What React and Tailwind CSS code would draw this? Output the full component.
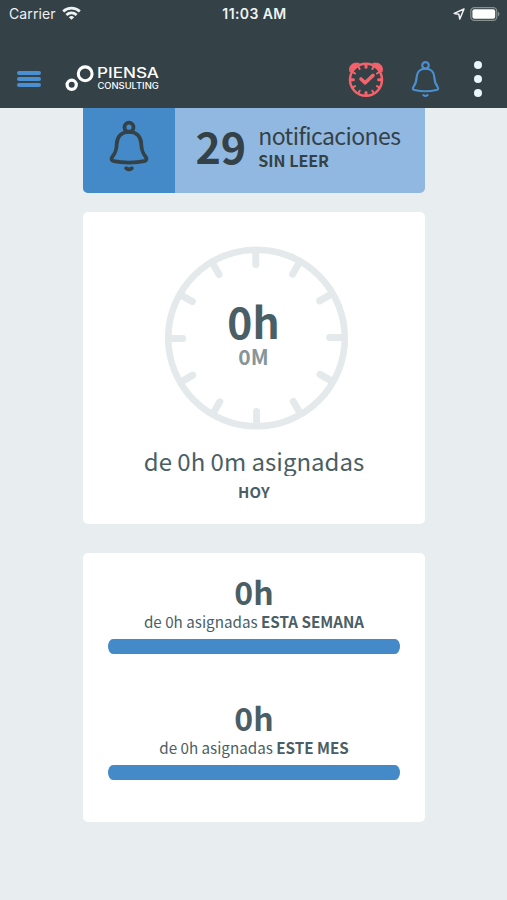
const sans = "font-['Noto_Sans_CJK_SC','Noto_Sans',sans-serif]";

const periods = [
  { label: "ESTA SEMANA", hours: "0h", assigned: "0h", progress: 100 },
  { label: "ESTE MES", hours: "0h", assigned: "0h", progress: 100 },
];

const ticks = [0, 30, 60, 90, 120, 150, 180, 210, 240, 270, 300, 330];

const BellIcon = ({ className, strokeWidth = 3 }) => (
  <svg viewBox="0 0 40 52" className={className} fill="none" stroke="currentColor" strokeWidth={strokeWidth} strokeLinecap="round" strokeLinejoin="round">
    <circle cx="20" cy="7.2" r="4.5" />
    <path d="M20 11.8C12.5 11.8 8.2 16.8 7.8 23.5C7.4 31 6.2 33.2 3.6 36.4C1.8 39 2.4 40.8 4.8 41.2C13 43 27 43 35.2 41.2C37.6 40.8 38.2 39 36.4 36.4C33.8 33.2 32.6 31 32.2 23.5C31.8 16.8 27.5 11.8 20 11.8Z" />
    <path d="M17.2 48.2Q20 50.4 22.8 48.2" />
  </svg>
);

const AlarmIcon = () => (
  <svg viewBox="0 0 36 38" className="w-9 h-[38px] text-[#f4636b]" fill="none" stroke="currentColor" strokeLinecap="round" strokeLinejoin="round">
    <path d="M1.8 11.5C0.4 6 4.6 1.8 11 3.4Z" fill="currentColor" strokeWidth="1" />
    <path d="M34.2 11.5C35.6 6 31.4 1.8 25 3.4Z" fill="currentColor" strokeWidth="1" />
    <circle cx="18" cy="19.8" r="16" strokeWidth="2.5" />
    {ticks.map((angle) => (
      <path key={angle} d="M18 5V7.2" strokeWidth={angle % 90 === 0 ? 3 : 2} transform={`rotate(${angle} 18 19.8)`} />
    ))}
    <path d="M13 19L17.2 22.8L25 15.4" strokeWidth="3.6" />
  </svg>
);

const Logo = () => (
  <svg viewBox="0 0 96 28" className="w-24 h-7 text-white" fill="none" stroke="currentColor">
    <circle cx="20.2" cy="9.8" r="6.9" strokeWidth="3.1" />
    <circle cx="6.7" cy="20.8" r="4.6" strokeWidth="3.2" />
    <g fill="currentColor" stroke="none" className="font-['Inter',sans-serif]">
      <text x="32" y="13.6" fontSize="14.2" fontWeight="500" textLength="62" lengthAdjust="spacingAndGlyphs">PIENSA</text>
      <text x="32.4" y="24.5" fontSize="8.4" fontWeight="500" textLength="61.4" lengthAdjust="spacingAndGlyphs">CONSULTING</text>
    </g>
  </svg>
);

const StatusBar = () => (
  <div className="grid grid-cols-3 items-center h-7 pl-[9px] pr-[7px] font-['Inter',sans-serif] text-[14px] leading-7 text-[#eef2f3]">
    <div className="flex items-center gap-1.5">
      <span className="tracking-[0.1px]">Carrier</span>
      <svg viewBox="0 0 19 14" className="w-[19px] h-3.5 -mt-0.5" fill="none" stroke="currentColor" strokeWidth="2.7">
        <path d="M1.2 5.4C5.8 1 13.2 1 17.8 5.4" />
        <path d="M4.4 9C7.3 6.2 11.7 6.2 14.6 9" />
        <path d="M6.8 11.2Q9.5 9 12.2 11.2L9.5 13.8Z" fill="currentColor" stroke="none" />
      </svg>
    </div>
    <span className="text-center font-semibold whitespace-nowrap text-[14px] tracking-[0.4px]">11:03 AM</span>
    <div className="flex items-center justify-end gap-[5px]">
      <svg viewBox="0 0 12 12" className="w-3 h-3" fill="none" stroke="currentColor" strokeWidth="1.5" strokeLinejoin="round">
        <path d="M11 1L1.2 5.4L5.8 6.2L6.8 11Z" />
      </svg>
      <svg viewBox="0 0 30 15" className="w-[30px] h-[15px]" fill="none">
        <rect x="0.8" y="0.6" width="26" height="12.8" rx="3.6" stroke="#87918f" strokeWidth="1.2" />
        <rect x="2.4" y="2.2" width="22.8" height="9.6" rx="2" fill="#ffffff" />
        <path d="M28 4.8Q31 7 28 9.4Z" fill="#87918f" />
      </svg>
    </div>
  </div>
);

const Header = () => (
  <header className="h-[108px] bg-[#344146]">
    <StatusBar />
    <div className="flex items-center justify-between h-20 pt-5 pl-[17px] pr-[25px]">
      <div className="flex items-center">
        <button className="flex flex-col gap-[2.5px] mt-0.5 mr-6">
          <span className="block w-6 h-[3.7px] rounded-full bg-[#4a8fd2]"></span>
          <span className="block w-6 h-[3.7px] rounded-full bg-[#4a8fd2]"></span>
          <span className="block w-6 h-[3.7px] rounded-full bg-[#4a8fd2]"></span>
        </button>
        <Logo />
      </div>
      <div className="flex items-center pt-px">
        <AlarmIcon />
        <BellIcon className="w-[29px] h-[38px] ml-[27px] text-[#4a8fd2]" strokeWidth={3} />
        <button className="flex flex-col gap-1.5 ml-[34.5px]">
          <span className="block size-2 rounded-full bg-[#eaf6f9]"></span>
          <span className="block size-2 rounded-full bg-[#eaf6f9]"></span>
          <span className="block size-2 rounded-full bg-[#eaf6f9]"></span>
        </button>
      </div>
    </div>
  </header>
);

const Notifications = () => (
  <section className="flex h-[84.5px] rounded-b-[5px] overflow-hidden bg-[#90b8e0] text-[#344146]">
    <div className="w-[91.5px] shrink-0 bg-[#448ac9] flex justify-center pt-3">
      <BellIcon className="w-10 h-[52px]" strokeWidth={3.8} />
    </div>
    <span className="ml-[21px] pt-[17px] text-[43px] leading-[40px] font-bold">29</span>
    <div className="ml-3 pt-[15px] whitespace-nowrap">
      <p className="text-[23px] leading-6 tracking-[-0.58px]">notificaciones</p>
      <p className="mt-[5px] text-[16px] leading-4 font-bold">SIN LEER</p>
    </div>
  </section>
);

const TodayCard = () => (
  <section className="mt-[19.5px] h-[311.5px] rounded-[5px] bg-white pt-[34px] text-center text-[#4a5e65]">
    <div className="grid w-[184px] ml-[82px]">
      <svg viewBox="0 0 184 184" className="col-start-1 row-start-1 w-[184px] h-[184px]" fill="none" stroke="#e4e9eb" strokeLinecap="round">
        <circle cx="91.5" cy="92" r="88.3" strokeWidth="6.6" />
        {ticks.map((angle) => (
          <path key={angle} d="M90.8 6V18.5" strokeWidth="7" transform={`rotate(${angle} 91.2 92)`} />
        ))}
      </svg>
      <div className="col-start-1 row-start-1 pt-[55px] pr-[7px] font-bold">
        <p className="text-[42.5px] leading-[40px]">0h</p>
        <p className="mt-[5px] text-[21px] leading-5 text-[#87959a]">0M</p>
      </div>
    </div>
    <p className="mt-5 h-[26px] overflow-hidden text-[24px] leading-[21px] whitespace-nowrap">de 0h 0m asignadas</p>
    <p className="mt-[7.5px] text-[15px] leading-4 font-bold tracking-[0.3px]">HOY</p>
  </section>
);

const PeriodsCard = () => (
  <section className="mt-[29.5px] h-[268.5px] rounded-[5px] bg-white px-[25px] pt-[21.5px] flex flex-col gap-[47px] text-center text-[#4a5e65]">
    {periods.map((period) => (
      <div key={period.label}>
        <p className="text-[32px] leading-8 font-bold">{period.hours}</p>
        <p className="mt-[6.5px] text-[15.2px] leading-4 whitespace-nowrap">
          de {period.assigned} asignadas <span className="font-bold">{period.label}</span>
        </p>
        <div className="mt-[9.5px] h-[15px] rounded-[5px/7.5px] overflow-hidden">
          <div className="h-full bg-[#448ac9]" style={{ width: `${period.progress}%` }}></div>
        </div>
      </div>
    ))}
  </section>
);

const App = () => (
  <div className={`w-[507px] h-[900px] overflow-hidden bg-[#e8edf0] ${sans}`}>
    <Header />
    <main className="w-[342px] ml-[83px]">
      <Notifications />
      <TodayCard />
      <PeriodsCard />
    </main>
  </div>
);

export default App;
